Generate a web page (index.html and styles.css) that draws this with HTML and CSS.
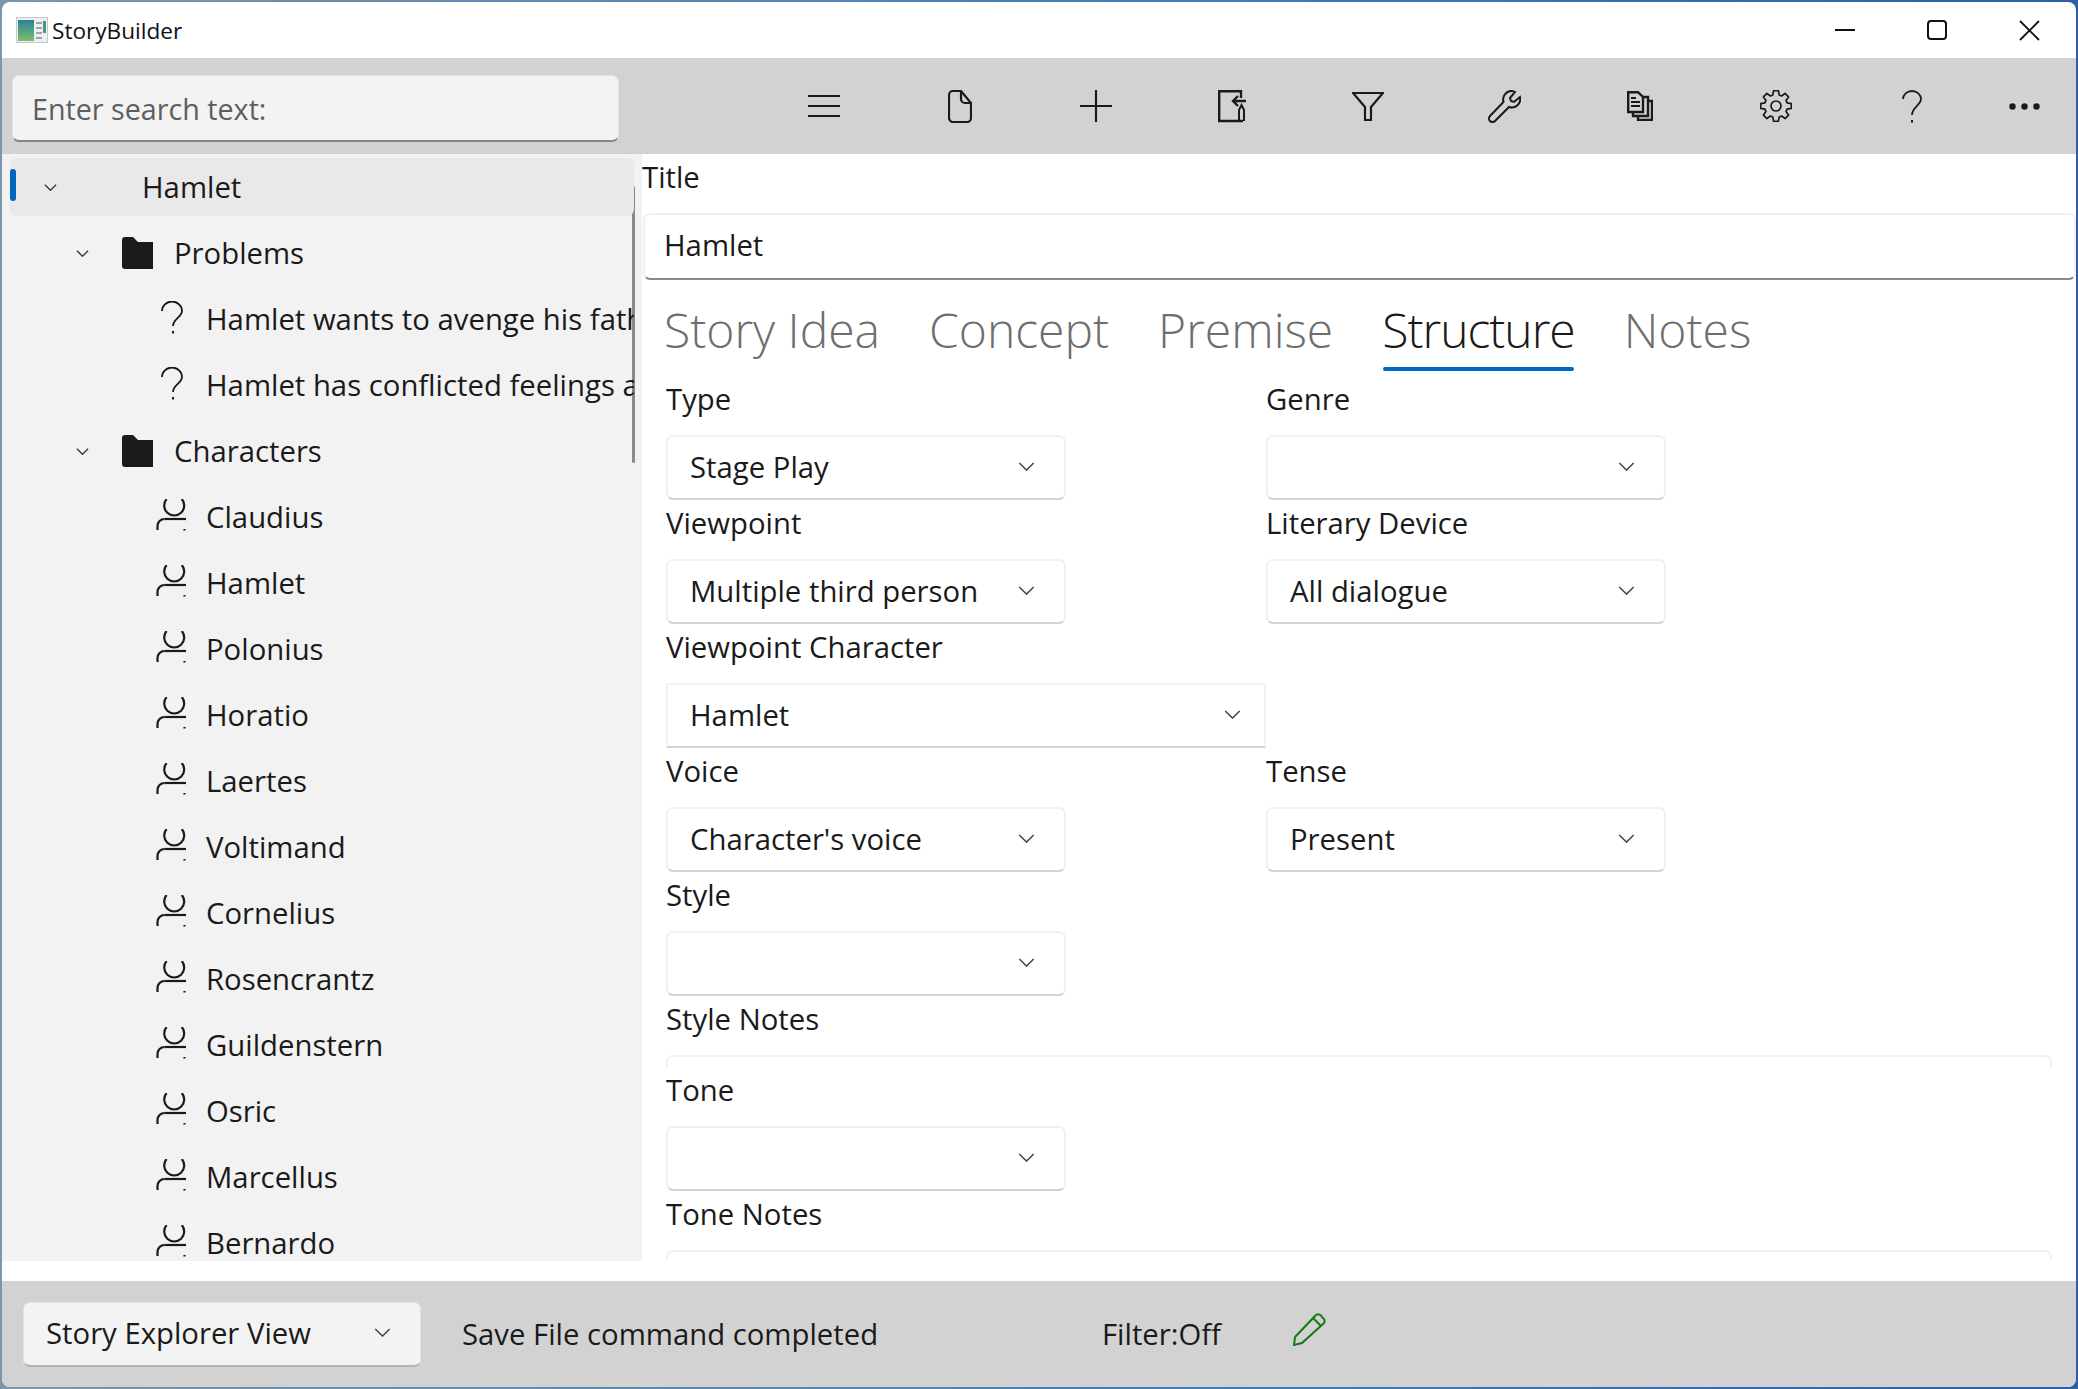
FILE: index.html
```html
<!DOCTYPE html>
<html lang="en">

<head>
    <meta charset="UTF-8">
    <title>StoryBuilder</title>
    <link rel="stylesheet" href="styles.css">
</head>

<body>
    <svg class="defs" width="0" height="0">
        <defs>
            <linearGradient id="g-app" x1="0" y1="0" x2="0" y2="1">
                <stop offset="0" stop-color="#2f7f9c" />
                <stop offset="1" stop-color="#7cbf6a" />
            </linearGradient>
            <g id="i-person" fill="none" stroke="#1a1a1a" stroke-width="2.2">
                <path d="M10.600 0a10 10 0 1 0 15.200 0" />
                <path d="M8.500 20H30" />
                <path d="M1.500 31v-4a7 7 0 0 1 7-7" />
                <path d="M28.500 30v1.500" />
            </g>
            <g id="i-question" fill="none" stroke="#1a1a1a" stroke-width="1.800">
                <path d="M6 10a10 9.500 0 0 1 20 0c0 6-9 8-9 15" />
                <path d="M17 30v2.500" stroke-width="2" />
            </g>
            <path id="i-folder" d="M0 3a3 3 0 0 1 3-3h8l5 5h15v27H3a3 3 0 0 1-3-3z" fill="#1a1a1a" />
            <path id="i-chev" d="M1 1l8 8 8-8" fill="none" />
        </defs>
    </svg>

    <div class="window">
        <header class="titlebar">
            <svg class="appicon" width="32" height="26" viewBox="0 0 32 26">
                <rect width="32" height="26" fill="#c4cace" />
                <rect x="1" y="1" width="30" height="24" fill="#eef0f0" />
                <rect x="2" y="3" width="16" height="21" fill="url(#g-app)" />
                <rect x="20" y="5" width="6" height="2" fill="#9aa6ab" />
                <rect x="20" y="10" width="6" height="2" fill="#9aa6ab" />
                <rect x="20" y="15" width="6" height="2" fill="#9aa6ab" />
                <rect x="20" y="20" width="6" height="2" fill="#9aa6ab" />
                <rect x="27" y="4" width="3" height="12" fill="#3f9a80" />
            </svg>
            <span class="apptitle">StoryBuilder</span>
            <div class="winctl">
                <svg width="20" height="4" viewBox="0 0 20 4"><path d="M0 2h20" stroke="#111" stroke-width="2" /></svg>
                <svg width="20" height="20" viewBox="0 0 20 20"><rect x="1" y="1" width="18" height="18" rx="3" fill="none" stroke="#111" stroke-width="2" /></svg>
                <svg width="21" height="21" viewBox="0 0 21 21"><path d="M1 1l19 19M20 1L1 20" stroke="#111" stroke-width="1.800" /></svg>
            </div>
        </header>

        <div class="toolbar">
            <div class="searchbox">Enter search text:</div>
            <div class="tools">
                <button class="tool"><svg width="32" height="24" viewBox="0 0 32 24"><path d="M0 2h32M0 12h32M0 22h32" stroke="#1a1a1a" stroke-width="2.200" /></svg></button>
                <button class="tool"><svg width="24" height="33" viewBox="0 0 24 33" fill="none" stroke="#1a1a1a" stroke-width="2.200"><path d="M5 1h8l10 12v15a4 4 0 0 1-4 4H5a4 4 0 0 1-4-4V5a4 4 0 0 1 4-4z" /><path d="M13 1v8a4 4 0 0 0 4 4h6" /></svg></button>
                <button class="tool"><svg width="32" height="32" viewBox="0 0 32 32"><path d="M0 16h32M16 0v32" stroke="#1a1a1a" stroke-width="2.200" /></svg></button>
                <button class="tool"><svg width="28" height="33" viewBox="0 0 28 33" fill="none" stroke="#1a1a1a" stroke-width="2.400"><path d="M23 8V1.200H1.200V31H25" /><path d="M28 11H15M20 6l-5 5 5 5" /><path d="M21 31V20l2.500-5 2.500 5v11" stroke-width="2" /></svg></button>
                <button class="tool"><svg width="32" height="29" viewBox="0 0 32 29" fill="none" stroke="#1a1a1a" stroke-width="2.200"><path d="M1 1h30L19 15v13h-6V15z" /></svg></button>
                <button class="tool"><svg width="33" height="33" viewBox="0 0 33 33" fill="none" stroke="#1a1a1a" stroke-width="2"><path d="M24 1a8.500 8.500 0 0 0-8.500 11L2 26a3.500 3.500 0 0 0 5 5l14-14a8.500 8.500 0 0 0 11-10l-6 5-3-1-1-3 5-6a8 8 0 0 0-3-1z" /></svg></button>
                <button class="tool"><svg width="26" height="30" viewBox="0 0 26 30" fill="none" stroke="#1a1a1a" stroke-width="2.400"><path d="M1.200 1.200H11L16 6v15H1.200z" /><path d="M16 6h5v19H6v-4" /><path d="M21 10h4v19H11v-4" /><path d="M4 7h5M4 11h9M4 15h9" stroke-width="1.800" /></svg></button>
                <button class="tool"><svg width="32" height="32" viewBox="0 0 32 32" fill="none" stroke="#1a1a1a" stroke-width="1.700" stroke-linejoin="round"><path d="M12.830 4.950L13.580 .69H18.420L19.170 4.950L21.580 5.940L25.110 3.460L28.540 6.890L26.060 10.420L27.050 12.830L31.310 13.580V18.420L27.050 19.170L26.060 21.580L28.540 25.110L25.110 28.540L21.580 26.060L19.170 27.050L18.420 31.310H13.580L12.830 27.050L10.420 26.060L6.890 28.540L3.460 25.110L5.940 21.580L4.950 19.170L.69 18.420V13.580L4.950 12.830L5.940 10.420L3.460 6.890L6.890 3.460L10.420 5.940z" /><circle cx="16" cy="16" r="5" /></svg></button>
                <button class="tool"><svg width="20" height="33" viewBox="0 0 20 33" fill="none" stroke="#1a1a1a" stroke-width="1.800"><path d="M1 9a9 8 0 0 1 18 0c0 6-9 8-9 16" /><path d="M10 30v2.500" stroke-width="2" /></svg></button>
                <button class="tool more"><svg width="31" height="7" viewBox="0 0 31 7" fill="#1a1a1a"><circle cx="3.500" cy="3.500" r="3.200" /><circle cx="15.500" cy="3.500" r="3.200" /><circle cx="27.500" cy="3.500" r="3.200" /></svg></button>
            </div>
        </div>

        <div class="main">
            <nav class="navpane">
                <div class="scrollthumb"></div>
                <div class="tree">
                    <div class="node selected lvl0"><span class="pill"></span><svg class="chev" width="13" height="7" viewBox="0 0 18 10"><use href="#i-chev" /></svg><span class="label">Hamlet</span></div>
                    <div class="node lvl1"><svg class="chev" width="13" height="7" viewBox="0 0 18 10"><use href="#i-chev" /></svg><svg class="nicon" width="32" height="32" viewBox="0 0 32 32"><use href="#i-folder" /></svg><span class="label">Problems</span></div>
                    <div class="node lvl2"><svg class="nicon" width="32" height="33" viewBox="0 0 32 33"><use href="#i-question" /></svg><span class="label">Hamlet wants to avenge his fath</span></div>
                    <div class="node lvl2"><svg class="nicon" width="32" height="33" viewBox="0 0 32 33"><use href="#i-question" /></svg><span class="label">Hamlet has conflicted feelings a</span></div>
                    <div class="node lvl1"><svg class="chev" width="13" height="7" viewBox="0 0 18 10"><use href="#i-chev" /></svg><svg class="nicon" width="32" height="32" viewBox="0 0 32 32"><use href="#i-folder" /></svg><span class="label">Characters</span></div>
                    <div class="node lvl2"><svg class="nicon" width="32" height="33" viewBox="0 0 32 33"><use href="#i-person" /></svg><span class="label">Claudius</span></div>
                    <div class="node lvl2"><svg class="nicon" width="32" height="33" viewBox="0 0 32 33"><use href="#i-person" /></svg><span class="label">Hamlet</span></div>
                    <div class="node lvl2"><svg class="nicon" width="32" height="33" viewBox="0 0 32 33"><use href="#i-person" /></svg><span class="label">Polonius</span></div>
                    <div class="node lvl2"><svg class="nicon" width="32" height="33" viewBox="0 0 32 33"><use href="#i-person" /></svg><span class="label">Horatio</span></div>
                    <div class="node lvl2"><svg class="nicon" width="32" height="33" viewBox="0 0 32 33"><use href="#i-person" /></svg><span class="label">Laertes</span></div>
                    <div class="node lvl2"><svg class="nicon" width="32" height="33" viewBox="0 0 32 33"><use href="#i-person" /></svg><span class="label">Voltimand</span></div>
                    <div class="node lvl2"><svg class="nicon" width="32" height="33" viewBox="0 0 32 33"><use href="#i-person" /></svg><span class="label">Cornelius</span></div>
                    <div class="node lvl2"><svg class="nicon" width="32" height="33" viewBox="0 0 32 33"><use href="#i-person" /></svg><span class="label">Rosencrantz</span></div>
                    <div class="node lvl2"><svg class="nicon" width="32" height="33" viewBox="0 0 32 33"><use href="#i-person" /></svg><span class="label">Guildenstern</span></div>
                    <div class="node lvl2"><svg class="nicon" width="32" height="33" viewBox="0 0 32 33"><use href="#i-person" /></svg><span class="label">Osric</span></div>
                    <div class="node lvl2"><svg class="nicon" width="32" height="33" viewBox="0 0 32 33"><use href="#i-person" /></svg><span class="label">Marcellus</span></div>
                    <div class="node lvl2"><svg class="nicon" width="32" height="33" viewBox="0 0 32 33"><use href="#i-person" /></svg><span class="label">Bernardo</span></div>
                </div>
            </nav>

            <section class="content">
                <div class="title-label">Title</div>
                <div class="title-input">Hamlet</div>
                <div class="tabs">
                    <span class="tab">Story Idea</span>
                    <span class="tab">Concept</span>
                    <span class="tab">Premise</span>
                    <span class="tab active">Structure</span>
                    <span class="tab">Notes</span>
                </div>
                <div class="form">
                    <div class="formrow">
                        <div class="field"><div class="flabel">Type</div><div class="combo"><span>Stage Play</span><svg class="chev" width="17" height="9" viewBox="0 0 18 10"><use href="#i-chev" /></svg></div></div>
                        <div class="field"><div class="flabel">Genre</div><div class="combo"><span></span><svg class="chev" width="17" height="9" viewBox="0 0 18 10"><use href="#i-chev" /></svg></div></div>
                    </div>
                    <div class="formrow">
                        <div class="field"><div class="flabel">Viewpoint</div><div class="combo"><span>Multiple third person</span><svg class="chev" width="17" height="9" viewBox="0 0 18 10"><use href="#i-chev" /></svg></div></div>
                        <div class="field"><div class="flabel">Literary Device</div><div class="combo"><span>All dialogue</span><svg class="chev" width="17" height="9" viewBox="0 0 18 10"><use href="#i-chev" /></svg></div></div>
                    </div>
                    <div class="formrow">
                        <div class="field"><div class="flabel">Viewpoint Character</div><div class="combo wide"><span>Hamlet</span><svg class="chev" width="17" height="9" viewBox="0 0 18 10"><use href="#i-chev" /></svg></div></div>
                    </div>
                    <div class="formrow">
                        <div class="field"><div class="flabel">Voice</div><div class="combo"><span>Character's voice</span><svg class="chev" width="17" height="9" viewBox="0 0 18 10"><use href="#i-chev" /></svg></div></div>
                        <div class="field"><div class="flabel">Tense</div><div class="combo"><span>Present</span><svg class="chev" width="17" height="9" viewBox="0 0 18 10"><use href="#i-chev" /></svg></div></div>
                    </div>
                    <div class="formrow">
                        <div class="field"><div class="flabel">Style</div><div class="combo"><span></span><svg class="chev" width="17" height="9" viewBox="0 0 18 10"><use href="#i-chev" /></svg></div></div>
                    </div>
                    <div class="flabel">Style Notes</div>
                    <div class="notes"></div>
                    <div class="formrow">
                        <div class="field"><div class="flabel">Tone</div><div class="combo"><span></span><svg class="chev" width="17" height="9" viewBox="0 0 18 10"><use href="#i-chev" /></svg></div></div>
                    </div>
                    <div class="flabel">Tone Notes</div>
                    <div class="notes"></div>
                </div>
            </section>
        </div>

        <footer class="statusbar">
            <div class="viewcombo"><span>Story Explorer View</span><svg class="chev" width="17" height="9" viewBox="0 0 18 10"><use href="#i-chev" /></svg></div>
            <span class="status">Save File command completed</span>
            <span class="filter">Filter:Off</span>
            <svg class="pencil" width="33" height="33" viewBox="0 0 33 33" fill="none" stroke="#107c10" stroke-width="2"><path d="M2 24L22 3a4 4 0 0 1 7 1l2 2a4 4 0 0 1-1 5L9 30l-8 2z" /><path d="M20 5l8 8" /></svg>
        </footer>
    </div>
</body>

</html>
```

FILE: styles.css
```css
* {
    box-sizing: border-box;
}

html,
body {
    margin: 0;
    height: 100%;
    overflow: hidden;
}

body {
    background: linear-gradient(90deg, #7d96a8 0%, #3f7cb6 60%, #2c5fa6 100%);
    font-family: "Open Sans", "Noto Sans", sans-serif;
    font-size: 29.3px;
    color: #1a1a1a;
    padding: 2px;
}

.defs {
    display: block;
    height: 0;
}

.window {
    width: 2074px;
    height: 1385px;
    background: #fff;
    border-radius: 8px;
    overflow: hidden;
    display: flex;
    flex-direction: column;
}

/* title bar */

.titlebar {
    height: 56px;
    flex: none;
    display: flex;
    align-items: center;
    padding-left: 14px;
}

.appicon {
    margin-right: 4px;
}

.apptitle {
    font-size: 22.6px;
    color: #111;
}

.winctl {
    margin-left: auto;
    display: flex;
    align-items: center;
    padding-right: 36px;
    gap: 72px;
}

/* toolbar */

.toolbar {
    height: 96px;
    flex: none;
    background: #d2d2d2;
    display: flex;
    align-items: center;
    padding-left: 10px;
}

.searchbox {
    width: 607px;
    height: 67px;
    margin-top: 5px;
    background: #f3f3f3;
    border: 1px solid #e3e3e3;
    border-bottom: 2px solid #868686;
    border-radius: 7px;
    padding-left: 19px;
    display: flex;
    align-items: center;
    font-size: 28.7px;
    color: #5e5e5e;
}

.tools {
    display: flex;
    margin-left: 137px;
}

.tool {
    width: 136px;
    height: 60px;
    padding: 0;
    border: 0;
    background: none;
    display: flex;
    align-items: center;
    justify-content: center;
}

.tool.more {
    width: 88px;
}

/* main area */

.main {
    flex: 1;
    display: flex;
    min-height: 0;
    padding-bottom: 20px;
}

.navpane {
    position: relative;
    width: 640px;
    flex: none;
    background: #f2f2f2;
    padding: 4px 8px 0 8px;
    overflow: hidden;
}

.scrollthumb {
    position: absolute;
    right: 7px;
    top: 32px;
    width: 3px;
    height: 277px;
    border-radius: 2px;
    background: #8a8a8a;
}

.node {
    position: relative;
    height: 66px;
    display: flex;
    align-items: center;
    white-space: nowrap;
    overflow: hidden;
    width: 624px;
}

.node .chev {
    stroke: #333;
    stroke-width: 1.8px;
    flex: none;
}

.label {
    padding-bottom: 1px;
}

.selected {
    height: 58px;
    margin-bottom: 4px;
    background: #e9e9e9;
    border-radius: 7px;
}

.pill {
    position: absolute;
    left: 0;
    top: 11px;
    width: 6px;
    height: 32px;
    border-radius: 3px;
    background: #0067c0;
}

.lvl0 {
    padding-left: 34px;
}

.lvl0 .label {
    margin-left: 85px;
}

.lvl1 {
    padding-left: 66px;
}

.lvl1 .nicon {
    margin-left: 33px;
    margin-right: 20px;
}

.lvl2 {
    padding-left: 146px;
}

.lvl2 .nicon {
    margin-right: 18px;
    margin-bottom: 4px;
}

.nicon {
    flex: none;
}

/* right side */

.content {
    flex: 1;
    min-width: 0;
    overflow: hidden;
    position: relative;
}

.title-label {
    height: 43px;
    line-height: 46px;
}

.title-input {
    height: 67px;
    margin: 16px 0 0 1px;
    border: 2px solid #f0f0f0;
    border-bottom: 2px solid #8a8a8a;
    border-radius: 7px;
    padding: 0 0 3px 19px;
    display: flex;
    align-items: center;
}

.tabs {
    display: flex;
    height: 97px;
    gap: 49px;
    padding: 18px 0 0 22px;
    font-size: 48px;
    font-weight: 300;
    color: #6e6e6e;
    align-items: flex-start;
}

.tab {
    position: relative;
    white-space: nowrap;
    line-height: 64px;
}

.tab.active {
    color: #1a1a1a;
    letter-spacing: -1px;
}

.tab.active::after {
    content: "";
    position: absolute;
    left: 1px;
    right: 1px;
    bottom: -9px;
    height: 4px;
    border-radius: 2px;
    background: #0067c0;
}

.form {
    padding: 0 24px 0 24px;
}

.formrow {
    display: flex;
}

.field {
    width: 600px;
}

.flabel {
    height: 44px;
    line-height: 44px;
    white-space: nowrap;
}

.combo {
    width: 400px;
    height: 65px;
    margin-top: 14px;
    margin-bottom: 1px;
    background: #fff;
    border: 2px solid #f1f1f1;
    border-bottom: 2px solid #d2d2d2;
    border-radius: 7px;
    display: flex;
    align-items: center;
    justify-content: space-between;
    padding: 0 29px 2px 22px;
}

.combo .chev,
.viewcombo .chev {
    stroke: #444;
    stroke-width: 1.6px;
}

.combo.wide {
    width: 600px;
    border-radius: 0;
    padding-right: 23px;
}

.notes {
    height: 13px;
    margin-top: 14px;
    border: 2px solid #f1f1f1;
    border-bottom: 0;
    border-radius: 7px 7px 0 0;
}

/* status bar */

.statusbar {
    height: 106px;
    flex: none;
    background: #d2d2d2;
    display: flex;
    align-items: center;
    padding-left: 21px;
    border-radius: 0 0 8px 8px;
}

.viewcombo {
    width: 398px;
    height: 65px;
    background: #f3f3f3;
    border: 1px solid #e3e3e3;
    border-bottom: 2px solid #b5b5b5;
    border-radius: 7px;
    display: flex;
    align-items: center;
    justify-content: space-between;
    padding: 0 29px 2px 22px;
}

.status {
    margin-left: 41px;
    width: 640px;
    white-space: nowrap;
    padding-bottom: 1px;
}

.filter {
    width: 191px;
    padding-bottom: 1px;
}

.pencil {
    margin-top: -10px;
}
```
